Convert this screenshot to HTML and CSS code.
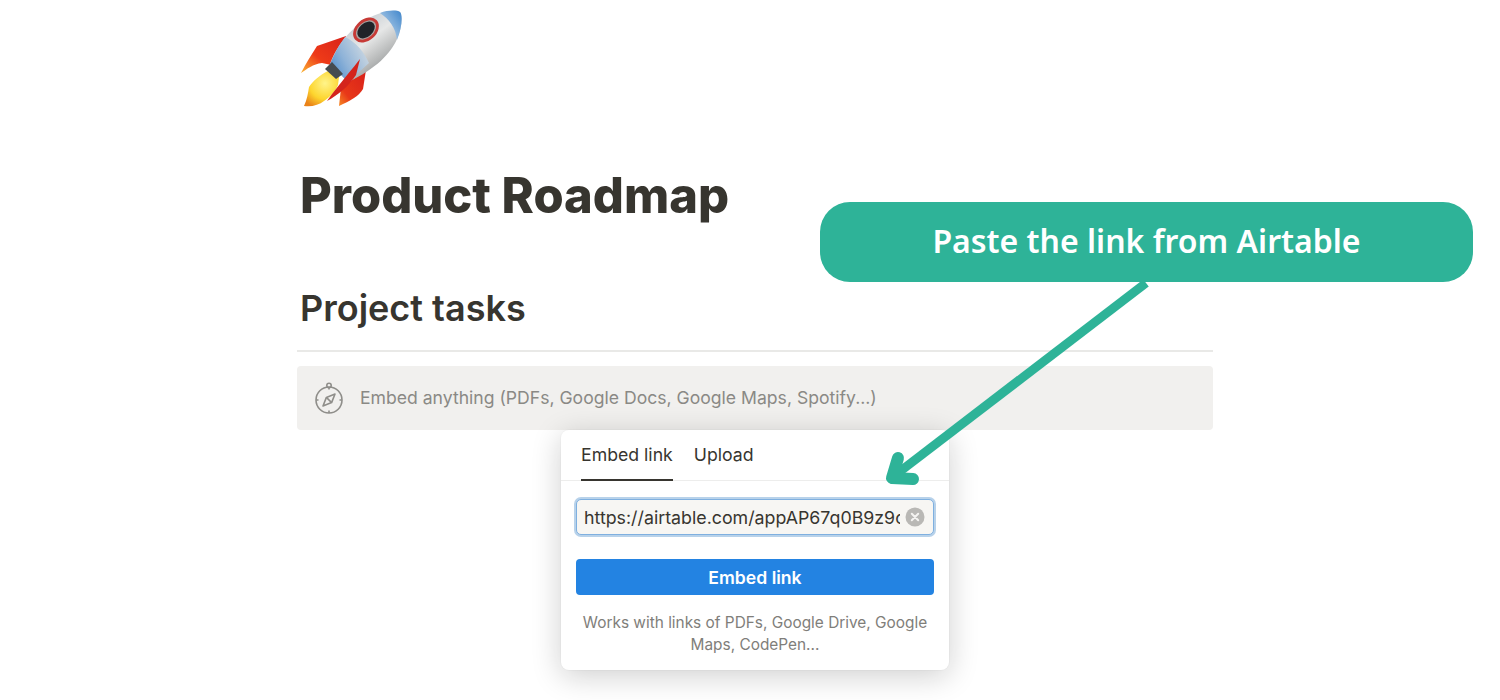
FILE: index.html
```html
<!DOCTYPE html>
<html lang="en">
<head>
<meta charset="utf-8">
<title>Product Roadmap</title>
<link rel="stylesheet" href="styles.css">
</head>
<body>
<main class="page">
  <svg class="rocket" width="104" height="100" viewBox="0 0 104 100" aria-hidden="true">
    <defs>
      <linearGradient id="body" x1="0.2" y1="0.1" x2="0.8" y2="0.9">
        <stop offset="0" stop-color="#b9c3cc"/>
        <stop offset="0.45" stop-color="#e6e7e7"/>
        <stop offset="0.75" stop-color="#b4b6b6"/>
        <stop offset="1" stop-color="#7f8385"/>
      </linearGradient>
      <linearGradient id="nose" x1="0" y1="1" x2="1" y2="0">
        <stop offset="0" stop-color="#c9d8e6"/>
        <stop offset="0.5" stop-color="#8cb6de"/>
        <stop offset="1" stop-color="#3f86cc"/>
      </linearGradient>
      <linearGradient id="low" x1="1" y1="0.2" x2="0" y2="0.8">
        <stop offset="0" stop-color="#d5dde3"/>
        <stop offset="0.6" stop-color="#8fb3d8"/>
        <stop offset="1" stop-color="#4f8ccb"/>
      </linearGradient>
      <linearGradient id="finL" x1="1" y1="0" x2="0" y2="1">
        <stop offset="0" stop-color="#d8221a"/>
        <stop offset="0.6" stop-color="#ee3a18"/>
        <stop offset="1" stop-color="#fbb733"/>
      </linearGradient>
      <linearGradient id="finR" x1="1" y1="0" x2="0" y2="1">
        <stop offset="0" stop-color="#d8201a"/>
        <stop offset="0.7" stop-color="#e83818"/>
        <stop offset="1" stop-color="#f78b24"/>
      </linearGradient>
      <radialGradient id="flame" cx="0.6" cy="0.35" r="0.75">
        <stop offset="0" stop-color="#fff48a"/>
        <stop offset="0.6" stop-color="#fdd52e"/>
        <stop offset="1" stop-color="#ea8218"/>
      </radialGradient>
    </defs>
    <path d="M1 65 C6 55 12 46 17 38 L46 28 L36 58 L22 55 C13 56 7 61 1 65 Z" fill="url(#finL)"/>
    <path d="M39 98 L41 80 L66 62 L63 81 C59 88 50 93 39 98 Z" fill="url(#finR)"/>
    <path d="M28 63 C20 67 13 73 9 79 C8 85 7 92 4 98 C12 99 19 97 24 93 C30 89 35 84 38 77 L39 69 Z" fill="url(#flame)"/>
    <path d="M30 56 C37 37 53 15 78 6 C88 2 97 2 100 4 C103 7 102 20 97 31 C91 45 76 61 48 74 Z" fill="url(#body)"/>
    <path d="M80 5 C88 2 97 2 100 4 C103 7 102 20 97 32 C96 20 89 11 80 5 Z" fill="url(#nose)"/>
    <path d="M30 56 C34 46 39 37 45 29 C56 34 64 44 69 55 C62 61 55 68 48 74 Z" fill="url(#low)"/>
    <path d="M25 61 L32 54 L43 66 L36 71 Z" fill="#454b50"/>
    <path d="M60 51 C54 59 40 75 27 93 C38 87 48 79 56 67 Z" fill="#d4241c"/>
    <ellipse cx="66" cy="22" rx="14.5" ry="10.5" transform="rotate(-42 66 22)" fill="#c73a36"/>
    <ellipse cx="66" cy="22" rx="11.5" ry="7.8" transform="rotate(-42 66 22)" fill="#a9a4a2"/>
    <ellipse cx="66" cy="22" rx="10" ry="6.8" transform="rotate(-42 66 22)" fill="#202328"/>
  </svg>
  <h1 class="title">Product Roadmap</h1>
  <h2 class="heading">Project tasks</h2>
  <hr class="rule">
  <div class="embed-bar">
    <svg class="compass" width="32" height="34" viewBox="0 0 32 34" fill="none" stroke="#8f8e8a" stroke-width="1.6" aria-hidden="true">
      <circle cx="16" cy="19" r="13"/>
      <circle cx="16" cy="4.5" r="2.2"/>
      <path d="M22 13 L18.6 21.6 L10 25 L13.4 16.4 Z" stroke-linejoin="round"/>
      <path d="M13.4 16.4 L18.6 21.6"/>
      <path d="M16 6v2.5M16 29.5V32M3 19h2.5M26.5 19H29"/>
    </svg>
    <span class="embed-label">Embed anything (PDFs, Google Docs, Google Maps, Spotify...)</span>
  </div>
</main>

<section class="popup">
  <nav class="tabs">
    <span class="tab tab-active">Embed link</span>
    <span class="tab">Upload</span>
  </nav>
  <div class="popup-body">
    <div class="url-field">
      <span class="url-text">https://airtable.com/appAP67q0B9z9c</span>
      <svg class="clear" width="20" height="20" viewBox="0 0 20 20" aria-hidden="true">
        <circle cx="10" cy="10" r="9.5" fill="#b9b8b5"/>
        <path d="M6.8 6.8l6.4 6.4M13.2 6.8l-6.4 6.4" stroke="#f4f3f1" stroke-width="2" stroke-linecap="round"/>
      </svg>
    </div>
    <button class="embed-btn" type="button">Embed link</button>
    <p class="hint">Works with links of PDFs, Google Drive, Google Maps, CodePen...</p>
  </div>
</section>

<svg class="arrow" width="280" height="215" viewBox="0 0 280 215" fill="none" stroke="#2eb398" aria-hidden="true">
  <path d="M266 3 L14 196" stroke-width="9"/>
  <path d="M18 178 L12 198 L33 199" stroke-width="12" stroke-linecap="round" stroke-linejoin="round"/>
</svg>

<div class="callout">Paste the link from Airtable</div>
</body>
</html>
```

FILE: styles.css
```css
* {
  box-sizing: border-box;
}

html,
body {
  margin: 0;
  height: 700px;
  overflow: hidden;
  background: #fff;
  font-family: Inter, "Liberation Sans", sans-serif;
}

.page {
  width: 916px;
  margin-left: 297px;
  display: flex;
  flex-direction: column;
}

.rocket {
  display: block;
  margin: 8px 0 0 3px;
  filter: blur(0.6px);
}

.title {
  margin: 58px 0 0 3px;
  font-size: 48.8px;
  line-height: 60px;
  font-weight: 800;
  color: #37352f;
}

.heading {
  margin: 60px 0 0 3px;
  font-size: 36px;
  line-height: 44px;
  font-weight: 600;
  color: #37352f;
}

.rule {
  width: 100%;
  height: 1.5px;
  margin: 20px 0 0;
  border: 0;
  background: #e9e9e7;
}

.embed-bar {
  display: flex;
  align-items: center;
  gap: 15px;
  height: 64px;
  margin-top: 14px;
  padding-left: 16px;
  border-radius: 4px;
  background: #f1f0ee;
}

.embed-label {
  font-size: 17.6px;
  color: #8a8985;
}

.popup {
  position: absolute;
  left: 561px;
  top: 430px;
  width: 388px;
  height: 240px;
  background: #fff;
  border-radius: 8px;
  box-shadow: 0 0 0 1px rgba(15, 15, 15, 0.02), 0 6px 30px rgba(15, 15, 15, 0.2);
}

.tabs {
  display: flex;
  gap: 21px;
  height: 51px;
  padding-left: 20px;
  border-bottom: 1px solid #ededec;
}

.tab {
  display: block;
  height: 51px;
  padding-top: 14px;
  font-size: 17.7px;
  line-height: 22px;
  color: #37352f;
}

.tab-active {
  border-bottom: 2px solid #37352f;
}

.popup-body {
  display: flex;
  flex-direction: column;
  padding: 18px 15px 0;
}

.url-field {
  display: flex;
  align-items: center;
  justify-content: space-between;
  width: 358px;
  height: 36px;
  padding: 0 8px 0 7px;
  background: #f7f6f3;
  border: 1px solid #7fb0e0;
  border-radius: 5px;
  box-shadow: 0 0 0 2px #b8d2ea;
}

.url-text {
  display: block;
  width: 316px;
  overflow: hidden;
  white-space: nowrap;
  font-size: 17.8px;
  color: #37352f;
}

.clear {
  flex: none;
}

.embed-btn {
  width: 358px;
  height: 36px;
  margin-top: 24px;
  padding: 0;
  border: 0;
  border-radius: 4px;
  background: #2383e2;
  color: #fff;
  font-family: inherit;
  font-size: 17.6px;
  font-weight: 600;
}

.hint {
  margin: 17px 0 0;
  font-size: 15.4px;
  line-height: 22px;
  text-align: center;
  color: #7f7e7a;
}

.arrow {
  position: absolute;
  left: 880px;
  top: 280px;
}

.callout {
  position: absolute;
  left: 820px;
  top: 202px;
  width: 653px;
  height: 80px;
  border-radius: 30px;
  background: #2eb398;
  color: #fff;
  font-family: "Noto Sans", sans-serif;
  font-size: 32px;
  font-weight: 600;
  line-height: 78px;
  text-align: center;
}
```
